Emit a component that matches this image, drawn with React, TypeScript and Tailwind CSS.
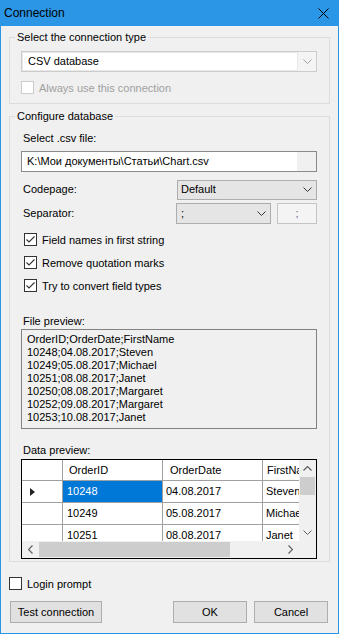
import React from "react";

const FONT = { fontFamily: '"Liberation Sans", Arial, sans-serif' };

function Chevron({ color = "#333", dir = "down" }: { color?: string; dir?: "down" | "up" | "left" | "right" }) {
  if (dir === "down")
    return (
      <svg width="9" height="5" viewBox="0 0 9 5">
        <path d="M0.5 0.5 L4.5 4.5 L8.5 0.5" stroke={color} fill="none" strokeWidth="1" />
      </svg>
    );
  if (dir === "up")
    return (
      <svg width="9" height="5" viewBox="0 0 9 5">
        <path d="M0.5 4.5 L4.5 0.5 L8.5 4.5" stroke={color} fill="none" strokeWidth="1.2" />
      </svg>
    );
  if (dir === "left")
    return (
      <svg width="5" height="9" viewBox="0 0 5 9">
        <path d="M4.5 0.5 L0.5 4.5 L4.5 8.5" stroke={color} fill="none" strokeWidth="1.2" />
      </svg>
    );
  return (
    <svg width="5" height="9" viewBox="0 0 5 9">
      <path d="M0.5 0.5 L4.5 4.5 L0.5 8.5" stroke={color} fill="none" strokeWidth="1.2" />
    </svg>
  );
}

function CheckBox({ checked, disabled, label }: { checked?: boolean; disabled?: boolean; label: string }) {
  return (
    <div className="flex items-center h-[13px]">
      <div
        className={
          "w-[13px] h-[13px] flex items-center justify-center bg-white border " +
          (disabled ? "border-[#cccccc]" : "border-[#333333]")
        }
      >
        {checked && (
          <svg width="11" height="11" viewBox="0 0 11 11">
            <path d="M1.5 5.5 L4 8 L9.5 2.5" stroke="#333" strokeWidth="1.1" fill="none" />
          </svg>
        )}
      </div>
      <span className={"ml-[5px] leading-[14px] " + (disabled ? "text-[#a0a0a0]" : "text-black")}>{label}</span>
    </div>
  );
}

const previewLines = [
  "OrderID;OrderDate;FirstName",
  "10248;04.08.2017;Steven",
  "10249;05.08.2017;Michael",
  "10251;08.08.2017;Janet",
  "10250;08.08.2017;Margaret",
  "10252;09.08.2017;Margaret",
  "10253;10.08.2017;Janet",
];

const rows = [
  ["10248", "04.08.2017", "Steven"],
  ["10249", "05.08.2017", "Michael"],
  ["10251", "08.08.2017", "Janet"],
];

function DataGrid() {
  return (
    <div className="w-[296px] h-[100px] border border-black bg-white flex flex-col text-[11px]">
      <div className="flex h-[81px]">
        <div className="w-[277px] overflow-hidden">
          <div className="w-[400px]">
            <div className="flex h-[21px] border-b border-[#a0a0a0] bg-white">
              <div className="w-[41px] border-r border-[#a0a0a0]" />
              <div className="w-[100px] border-r border-[#a0a0a0] pl-[6px] flex items-center">OrderID</div>
              <div className="w-[100px] border-r border-[#a0a0a0] pl-[7px] flex items-center">OrderDate</div>
              <div className="w-[100px] border-r border-[#a0a0a0] pl-[4px] flex items-center">FirstName</div>
            </div>
            {rows.map((r, i) => (
              <div key={i} className="flex h-[22px] border-b border-[#a0a0a0]">
                <div className="w-[41px] border-r border-[#a0a0a0] flex items-center pl-[8px]">
                  {i === 0 && (
                    <svg width="5" height="8" viewBox="0 0 5 8">
                      <path d="M0 0 L5 4 L0 8 Z" fill="#222" />
                    </svg>
                  )}
                </div>
                <div
                  className={
                    "w-[100px] border-r border-[#a0a0a0] pl-[4px] flex items-center " +
                    (i === 0 ? "bg-[#0078d7] text-white" : "")
                  }
                >
                  {r[0]}
                </div>
                <div className="w-[100px] border-r border-[#a0a0a0] pl-[3px] flex items-center">{r[1]}</div>
                <div className="w-[100px] border-r border-[#a0a0a0] pl-[3px] flex items-center">{r[2]}</div>
              </div>
            ))}
          </div>
        </div>
        <div className="w-[17px] bg-[#f0f0f0] flex flex-col items-center">
          <div className="h-[17px] flex items-center justify-center">
            <Chevron dir="up" color="#606060" />
          </div>
          <div className="w-[15px] h-[18px] bg-[#cdcdcd]" />
          <div className="flex-1" />
          <div className="h-[17px] flex items-center justify-center">
            <Chevron dir="down" color="#606060" />
          </div>
        </div>
      </div>
      <div className="flex h-[17px]">
        <div className="w-[277px] bg-[#f0f0f0] flex items-center">
          <div className="w-[17px] flex items-center justify-center">
            <Chevron dir="left" color="#606060" />
          </div>
          <div className="w-[191px] h-[15px] bg-[#cdcdcd]" />
          <div className="flex-1" />
          <div className="w-[17px] flex items-center justify-center">
            <Chevron dir="right" color="#606060" />
          </div>
        </div>
        <div className="w-[17px] bg-[#f0f0f0]" />
      </div>
    </div>
  );
}

export default function App() {
  return (
    <div
      className="w-[339px] h-[634px] bg-[#f0f0f0] border-x border-b border-[#2b95e6] flex flex-col text-[11px] text-black"
      style={FONT}
    >
      {/* Title bar */}
      <div className="h-[26px] -mx-px bg-[#2b95e6] flex items-center justify-between pl-[4px] pr-[10px]">
        <span className="text-[12px] leading-[14px] text-black">Connection</span>
        <svg width="11" height="11" viewBox="0 0 11 11">
          <path d="M0.5 0.5 L10.5 10.5 M10.5 0.5 L0.5 10.5" stroke="#000" strokeWidth="1" />
        </svg>
      </div>

      {/* Group 1 */}
      <fieldset className="ml-[8px] mt-[4px] w-[321px] border border-[#dcdcdc] p-0 m-0">
        <legend className="ml-[5px] px-[2px] leading-[14px]">Select the connection type</legend>
        <div className="pl-[11px] pt-[7px] pb-[9px]">
          <div className="w-[296px] h-[21px] border border-[#cccccc] bg-[#f4f4f4] flex items-stretch">
            <div className="w-[276px] bg-white border border-[#e8e8e8] pl-[5px] flex items-center">CSV database</div>
            <div className="flex-1 flex items-center justify-center">
              <Chevron color="#a0a0a0" />
            </div>
          </div>
          <div className="mt-[9px]">
            <CheckBox disabled label="Always use this connection" />
          </div>
        </div>
      </fieldset>

      {/* Group 2 */}
      <fieldset className="ml-[8px] mt-[5px] w-[321px] border border-[#dcdcdc] p-0 m-0">
        <legend className="ml-[5px] px-[2px] leading-[14px]">Configure database</legend>
        <div className="pl-[11px] pb-[2px]">
          <div className="mt-[8px] pl-[2px] leading-[14px]">Select .csv file:</div>
          <div className="mt-[6px] w-[296px] h-[21px] border border-[#8a8a8a] bg-[#f0f0f0] flex">
            <div className="w-[275px] bg-white pl-[5px] flex items-center">K:\Мои документы\Статьи\Chart.csv</div>
          </div>
          <div className="mt-[7px] w-[296px] h-[21px] flex items-center justify-between">
            <span className="pl-[2px]">Codepage:</span>
            <div className="w-[140px] h-[20px] bg-[#e5e5e5] border border-[#adadad] flex items-center justify-between pl-[3px] pr-[4px]">
              <span>Default</span>
              <Chevron color="#333" />
            </div>
          </div>
          <div className="mt-[3px] w-[296px] h-[21px] flex items-center">
            <span className="pl-[2px] flex-1">Separator:</span>
            <div className="w-[95px] h-[21px] bg-[#e5e5e5] border border-[#adadad] flex items-center justify-between pl-[4px] pr-[4px]">
              <span>;</span>
              <Chevron color="#333" />
            </div>
            <div className="ml-[6px] w-[40px] h-[21px] bg-[#f4f4f4] border border-[#c4c4c4] flex items-center justify-center text-[#6d6d8d]">
              ;
            </div>
          </div>
          <div className="mt-[9px] pl-[3px]">
            <CheckBox checked label="Field names in first string" />
          </div>
          <div className="mt-[10px] pl-[3px]">
            <CheckBox checked label="Remove quotation marks" />
          </div>
          <div className="mt-[10px] pl-[3px]">
            <CheckBox checked label="Try to convert field types" />
          </div>
          <div className="mt-[22px] pl-[2px] leading-[14px]">File preview:</div>
          <div className="mt-[1px] w-[296px] h-[100px] border border-[#828282] pt-[3px] pl-[5px]">
            {previewLines.map((l, i) => (
              <div key={i} className="leading-[13px]">
                {l}
              </div>
            ))}
          </div>
          <div className="mt-[14px] pl-[2px] leading-[14px]">Data preview:</div>
          <div className="mt-[2px]">
            <DataGrid />
          </div>
        </div>
      </fieldset>

      <div className="ml-[8px] mt-[15px]">
        <CheckBox label="Login prompt" />
      </div>

      <div className="mt-[11px] flex items-center pl-[9px]">
        <button className="w-[92px] h-[22px] bg-[#e1e1e1] border border-[#adadad] text-[11px] flex items-center justify-center">
          Test connection
        </button>
        <div className="flex-1" />
        <button className="w-[74px] h-[22px] bg-[#e1e1e1] border border-[#adadad] text-[11px] flex items-center justify-center">
          OK
        </button>
        <button className="ml-[7px] mr-[10px] w-[74px] h-[22px] bg-[#e1e1e1] border border-[#adadad] text-[11px] flex items-center justify-center">
          Cancel
        </button>
      </div>
    </div>
  );
}
